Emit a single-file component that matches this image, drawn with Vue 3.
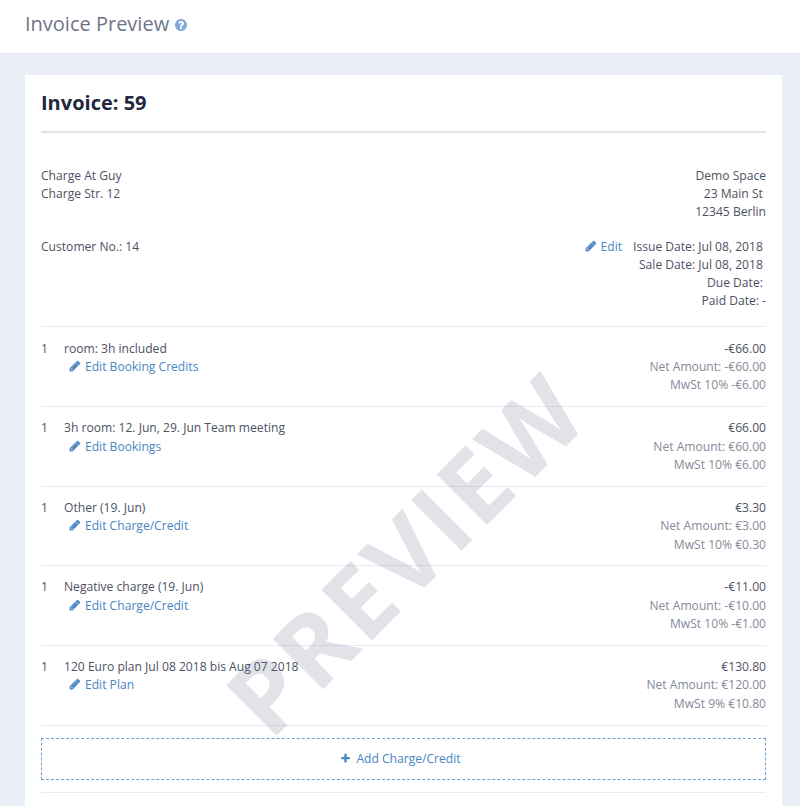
<script setup>
const pencil = 'M491 1536l91-91-235-235-91 91v107h128v128h107zm523-928q0-22-22-22-10 0-17 7l-542 542q-7 7-7 17 0 22 22 22 10 0 17-7l542-542q7-7 7-17zm-54-192l416 416-832 832h-416v-416zm683 96q0 53-37 90l-166 166-416-416 166-165q36-38 90-38 53 0 91 38l235 234q37 39 37 91z'
const items = [
  { qty: 1, name: 'room: 3h included', link: 'Edit Booking Credits', total: '-€66.00', net: 'Net Amount: -€60.00', tax: 'MwSt 10% -€6.00' },
  { qty: 1, name: '3h room: 12. Jun, 29. Jun Team meeting', link: 'Edit Bookings', total: '€66.00', net: 'Net Amount: €60.00', tax: 'MwSt 10% €6.00' },
  { qty: 1, name: 'Other (19. Jun)', link: 'Edit Charge/Credit', total: '€3.30', net: 'Net Amount: €3.00', tax: 'MwSt 10% €0.30' },
  { qty: 1, name: 'Negative charge (19. Jun)', link: 'Edit Charge/Credit', total: '-€11.00', net: 'Net Amount: -€10.00', tax: 'MwSt 10% -€1.00' },
  { qty: 1, name: '120 Euro plan Jul 08 2018 bis Aug 07 2018', link: 'Edit Plan', total: '€130.80', net: 'Net Amount: €120.00', tax: 'MwSt 9% €10.80' },
]
</script>

<template>
  <div class="page">
    <header class="top">
      <h1>Invoice Preview</h1>
      <svg class="help" viewBox="0 0 1792 1792"><path fill="currentColor" d="M1024 1376v-192q0-14-9-23t-23-9h-192q-14 0-23 9t-9 23v192q0 14 9 23t23 9h192q14 0 23-9t9-23zm256-672q0-88-55.5-163t-138.5-116-170-41q-243 0-371 213-15 24 8 42l132 100q7 6 19 6 16 0 25-12 53-68 86-92 34-24 86-24 48 0 85.5 26t37.5 59q0 38-20 61t-68 45q-63 28-115.5 86.5t-52.5 125.5v36q0 14 9 23t23 9h192q14 0 23-9t9-23q0-19 21.5-49.5t54.5-49.5q32-18 49-28.5t46-35 44.5-48 28-60.5 12.5-81zm384 192q0 209-103 385.5t-279.5 279.5-385.5 103-385.5-103-279.5-279.5-103-385.5 103-385.5 279.5-279.5 385.5-103 385.5 103 279.5 279.5 103 385.5z"/></svg>
    </header>
    <main class="bg">
      <section class="card">
        <h2>Invoice: 59</h2>
        <div class="parties">
          <div>
            <div>Charge At Guy</div>
            <div>Charge Str. 12</div>
          </div>
          <div class="right">
            <div>Demo Space</div>
            <div>23 Main St&nbsp;</div>
            <div>12345 Berlin</div>
          </div>
        </div>
        <div class="meta">
          <div>Customer No.: 14</div>
          <div class="right">
            <div>
              <a class="link edit"><svg class="ico" viewBox="0 0 1792 1792"><path fill="currentColor" :d="pencil"/></svg>Edit</a>Issue Date: Jul 08, 2018&nbsp;
            </div>
            <div>Sale Date: Jul 08, 2018&nbsp;</div>
            <div>Due Date:&nbsp;</div>
            <div>Paid Date: -</div>
          </div>
        </div>
        <div v-for="item in items" :key="item.name" class="row">
          <div class="qty">{{ item.qty }}</div>
          <div class="desc">
            <div>{{ item.name }}</div>
            <a class="link sub"><svg class="ico" viewBox="0 0 1792 1792"><path fill="currentColor" :d="pencil"/></svg>{{ item.link }}</a>
          </div>
          <div class="amounts">
            <div>{{ item.total }}</div>
            <div class="muted">{{ item.net }}</div>
            <div class="muted">{{ item.tax }}</div>
          </div>
        </div>
        <div class="add-wrap">
          <a class="add link">
            <svg class="plus" viewBox="0 0 1792 1792"><path fill="currentColor" d="M1600 736v192q0 40-28 68t-68 28h-416v416q0 40-28 68t-68 28h-192q-40 0-68-28t-28-68v-416h-416q-40 0-68-28t-28-68v-192q0-40 28-68t68-28h416v-416q0-40 28-68t68-28h192q40 0 68 28t28 68v416h416q40 0 68 28t28 68z"/></svg>Add Charge/Credit
          </a>
        </div>
      </section>
      <div class="watermark">PREVIEW</div>
    </main>
  </div>
</template>

<style scoped>
.page {
  position: relative;
  height: 806px;
  overflow: hidden;
  font-family: "Open Sans", sans-serif;
  font-size: 12.1px;
  line-height: 18px;
  color: #4d5263;
  background: #ebf0f8;
}
.top {
  box-sizing: border-box;
  height: 54px;
  background: #fff;
  border-bottom: 1px solid #e3e8f1;
  padding: 0 25px 6px;
  display: flex;
  align-items: center;
  gap: 5px;
}
h1 {
  margin: 0;
  font-size: 20px;
  font-weight: 400;
  line-height: 28px;
  color: #6e7588;
}
.help { width: 14px; height: 14px; color: #80aad6; margin-top: 3px; }
.bg { padding: 21px 18px 0 25px; }
.card {
  background: #fff;
  padding: 16px 16px 0;
  height: 740px;
  box-sizing: border-box;
}
h2 {
  margin: 0;
  font-size: 20px;
  font-weight: 700;
  line-height: 24px;
  color: #22273c;
  padding-bottom: 16px;
  border-bottom: 2px solid #e2e3e6;
}
.parties { display: flex; justify-content: space-between; margin-top: 34px; }
.meta { display: flex; justify-content: space-between; margin-top: 17px; padding-bottom: 16.4px; }
.right { text-align: right; }
.link { color: #4a86c2; }
.edit { margin-right: 11px; }
.ico { width: 12px; height: 12px; margin-right: 4px; vertical-align: -1px; }
.ico path { stroke: currentColor; stroke-width: 50; }
.row {
  box-sizing: border-box;
  height: 79.6px;
  border-top: 1px solid #e8ebf4;
  padding-top: 12.2px;
  line-height: 18.4px;
  display: flex;
}
.qty { width: 23px; }
.desc { flex: 1; }
.sub { display: block; padding-left: 5px; }
.amounts { text-align: right; }
.muted { color: #858a99; }
.add-wrap {
  border-top: 1px solid #e8ebf4;
  border-bottom: 1px solid #e8ebf4;
  margin-top: 0.4px;
  padding: 12px 0;
  box-sizing: border-box;
  height: 68px;
}
.add {
  display: flex;
  align-items: center;
  justify-content: center;
  height: 42px;
  box-sizing: border-box;
  border: 1px dashed #6ca0d2;
  padding-right: 6px;
}
.plus { width: 11px; height: 11px; margin-right: 5px; }
.watermark {
  position: absolute;
  left: 154px;
  top: 493px;
  width: 500px;
  text-align: center;
  transform: rotate(-45deg);
  font-size: 100px;
  letter-spacing: 3px;
  line-height: 120px;
  font-weight: 700;
  color: rgba(90, 100, 125, 0.18);
  pointer-events: none;
  white-space: nowrap;
}
</style>
